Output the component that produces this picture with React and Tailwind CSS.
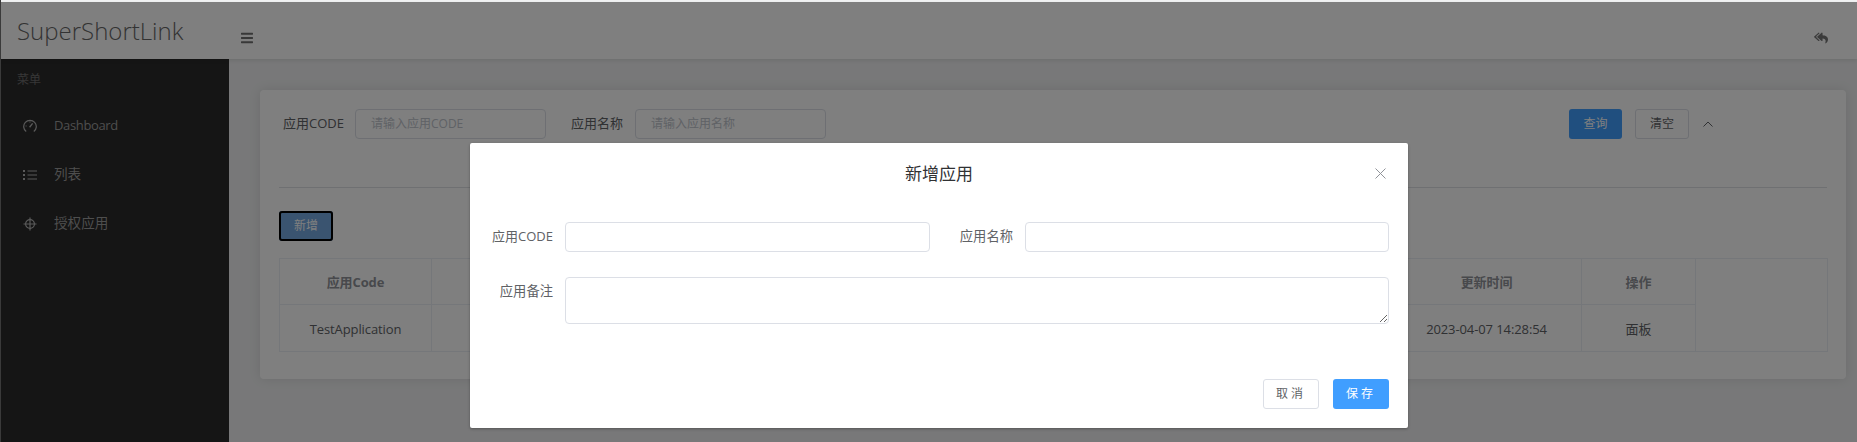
import React from "react";
import { FaBars, FaReplyAll } from "react-icons/fa";

const font = "font-['Open_Sans','Noto_Sans_CJK_SC',sans-serif]";

function GaugeIcon() {
  return (
    <svg width="14" height="14" viewBox="0 0 14 14" fill="none" stroke="#b4b4b4" strokeWidth="1.2">
      <path d="M3.2 12.6A6.3 6.3 0 1 1 10.8 12.6" />
      <path d="M6.6 8.2L9.6 4.4" strokeWidth="1.4" />
      <path d="M2.6 7H3.6M7 2.6V3.6" />
    </svg>
  );
}
function ListIcon() {
  return (
    <svg width="14" height="10" viewBox="0 0 14 10" fill="none" stroke="#b4b4b4" strokeWidth="1.2">
      <path d="M4.5 1H14M4.5 5H14M4.5 9H14" />
      <path d="M0 1H2M0 5H2M0 9H2" strokeWidth="1.8" />
    </svg>
  );
}
function TargetIcon() {
  return (
    <svg width="14" height="14" viewBox="0 0 14 14" fill="none" stroke="#b4b4b4" strokeWidth="1.2">
      <circle cx="7" cy="7" r="4.4" />
      <path d="M0.5 7H13.5M7 0.5V13.5" />
    </svg>
  );
}

function NavItem({ icon, label, textClass }) {
  return (
    <div className={`flex h-[49px] items-center text-[#9c9c9c] ${textClass}`}>
      <span className="flex w-[14px] ml-[22px] mr-[17px] justify-center">{icon}</span>
      {label}
    </div>
  );
}

export default function App() {
  return (
    <div className={`${font} relative h-[442px] w-[1857px] overflow-hidden bg-[#f0f1f2] pt-[2px] pl-[1px]`}>
      <div className="flex h-[57px] bg-white shadow-[0_2px_4px_rgba(0,0,0,0.08)] relative z-10">
        <div className="w-[228px] shrink-0 pl-[16px] pt-[12px] text-[24px] leading-[33px] font-light text-[#666]">SuperShortLink</div>
        <div className="flex flex-1 items-center justify-between pt-[15px] pl-[12px] pr-[29px]">
          <FaBars className="text-[#707070] w-[12px] h-[14px]" />
          <FaReplyAll className="text-[#777] w-[14px] h-[14px]" />
        </div>
      </div>
      <div className="flex h-[383px]">
        <aside className="w-[228px] shrink-0 bg-[#2a2a2a]">
          <div className="pl-[16px] pt-[13px] pb-[13px] text-[12px] leading-[16px] text-[#6e6e6e]">菜单</div>
          <NavItem icon={<GaugeIcon />} label="Dashboard" textClass="text-[13px] tracking-[-0.35px]" />
          <NavItem icon={<ListIcon />} label="列表" textClass="text-[13.6px]" />
          <NavItem icon={<TargetIcon />} label="授权应用" textClass="text-[13.6px]" />
        </aside>
        <main className="min-w-0 flex-1 pl-[31px] pr-[11px] pt-[31px]">
          <div className="h-[289px] rounded-[4px] bg-white px-[19px] pt-[19px] shadow-[0_0_12px_rgba(0,0,0,0.1)]">
            <div className="flex h-[30px] items-center text-[13px] text-[#606266]">
              <span className="ml-[4px] w-[72px] whitespace-nowrap">应用CODE</span>
              <div className="flex h-[30px] w-[191px] items-center rounded-[4px] border border-[#dcdfe6] pl-[15px] text-[12px] text-[#c0c4cc]">请输入应用CODE</div>
              <span className="ml-[25px] w-[64px] whitespace-nowrap">应用名称</span>
              <div className="flex h-[30px] w-[191px] items-center rounded-[4px] border border-[#dcdfe6] pl-[15px] text-[12px] text-[#c0c4cc]">请输入应用名称</div>
              <div className="ml-auto flex items-center pr-[113px]">
                <button className="h-[30px] w-[53px] rounded-[3px] bg-[#409eff] text-[12px] text-white">查询</button>
                <button className="ml-[13px] h-[30px] w-[54px] rounded-[3px] border border-[#dcdfe6] bg-white text-[12px] text-[#606266]">清空</button>
                <svg className="ml-[13px]" width="12" height="8" viewBox="0 0 12 8" fill="none" stroke="#606266" strokeWidth="1"><path d="M1.5 6.5L6 2L10.5 6.5" /></svg>
              </div>
            </div>
            <div className="mt-[48px] border-t border-[#dfe1e5]" />
            <button className="mt-[23px] block h-[30px] w-[54px] rounded-[3px] bg-[#74a8e0] text-[12px] text-white outline-2 outline-black outline-offset-[-2px]">新增</button>
            <table className="mt-[17px] w-[1548px] table-fixed border-collapse text-center text-[13px] tracking-[-0.1px] text-[#606266]">
              <colgroup>
                <col className="w-[152px]" />
                <col className="w-[960px]" />
                <col className="w-[190px]" />
                <col className="w-[114px]" />
                <col className="w-[132px]" />
              </colgroup>
              <tbody>
                <tr className="h-[46px]">
                  <th className="border border-[#ebeef5] pt-[3px] font-bold text-[#909399]">应用Code</th>
                  <th className="border border-[#ebeef5]" />
                  <th className="border border-[#ebeef5] pt-[3px] font-bold text-[#909399]">更新时间</th>
                  <th className="border border-[#ebeef5] pt-[3px] font-bold text-[#909399]">操作</th>
                  <th rowSpan={2} className="border border-[#ebeef5]" />
                </tr>
                <tr className="h-[47px]">
                  <td className="border border-[#ebeef5] pt-[3px]">TestApplication</td>
                  <td className="border border-[#ebeef5]" />
                  <td className="border border-[#ebeef5] pt-[3px]">2023-04-07 14:28:54</td>
                  <td className="border border-[#ebeef5] pt-[3px]">面板</td>
                </tr>
              </tbody>
            </table>
          </div>
        </main>
      </div>

      <div className="absolute inset-0 top-[2px] left-[1px] bg-black/50 z-20" />
      <div className="absolute left-0 top-0 bottom-0 w-[1px] bg-[#3a3a3a] z-20" />

      <div className="absolute left-[470px] top-[143px] z-30 h-[285px] w-[938px] rounded-[2px] bg-white text-[#606266] shadow-[0_1px_3px_rgba(0,0,0,0.3)]">
        <div className="relative h-[79px] pt-[19px] text-center text-[17px] leading-[24px] text-[#303133]">
          新增应用
          <svg className="absolute right-[22px] top-[25px]" width="11" height="11" viewBox="0 0 11 11" fill="none" stroke="#909399" strokeWidth="1"><path d="M0.5 0.5L10.5 10.5M10.5 0.5L0.5 10.5" /></svg>
        </div>
        <div className="flex px-[19px] text-[13px]">
          <label className="flex h-[30px] w-[64px] items-center justify-end whitespace-nowrap">应用CODE</label>
          <input className="ml-[12px] h-[30px] w-[365px] rounded-[4px] border border-[#dcdfe6] outline-none" />
          <label className="ml-[31px] flex h-[30px] w-[52px] items-center justify-end whitespace-nowrap text-[13.3px]">应用名称</label>
          <input className="ml-[12px] h-[30px] w-[364px] rounded-[4px] border border-[#dcdfe6] outline-none" />
        </div>
        <div className="mt-[25px] flex px-[19px] text-[13.3px]">
          <label className="flex h-[30px] w-[64px] items-center justify-end whitespace-nowrap">应用备注</label>
          <textarea className="ml-[12px] block h-[47px] w-[824px] rounded-[4px] border border-[#dcdfe6] outline-none" />
        </div>
        <div className="mt-[55px] flex justify-end pr-[19px]">
          <button className="h-[30px] w-[56px] rounded-[3px] border border-[#dcdfe6] bg-white text-[12px] tracking-[3px] text-[#606266]">取消</button>
          <button className="ml-[14px] h-[30px] w-[56px] rounded-[3px] bg-[#409eff] text-[12px] tracking-[3px] text-white">保存</button>
        </div>
      </div>
    </div>
  );
}
